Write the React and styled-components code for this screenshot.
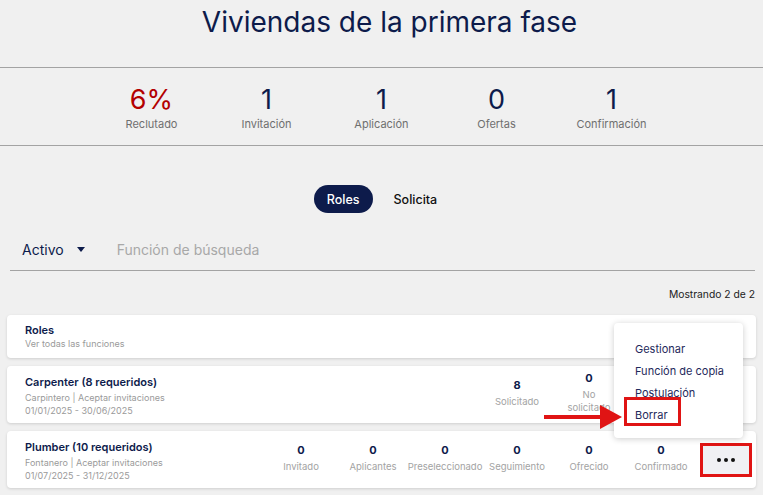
import React from "react";
import styled, { createGlobalStyle } from "styled-components";

const Global = createGlobalStyle`
  html, body { margin: 0; padding: 0; background: #f0f0f0; }
  body { font-family: Inter, "Noto Sans", sans-serif; color: #0d1b4b; }
  * { box-sizing: border-box; }
`;

const Page = styled.div`
  width: 763px;
  height: 495px;
  overflow: hidden;
  position: relative;
  background: #f0f0f0;
`;

const Title = styled.h1`
  margin: 0;
  height: 67px;
  padding: 3px 0 0 16px;
  text-align: center;
  font-weight: 400;
  font-size: 28px;
  line-height: 38px;
  color: #0d1b4b;
`;

const StatsBar = styled.div`
  border-top: 1px solid #a3a3a3;
  border-bottom: 1px solid #a3a3a3;
  height: 79px;
  display: flex;
  justify-content: center;
  padding-top: 15px;
`;

const Stat = styled.div`
  width: 115px;
  display: flex;
  flex-direction: column;
  align-items: center;
`;

const StatNum = styled.div`
  font-size: 27px;
  line-height: 34px;
  color: ${(p) => (p.$red ? "#b30000" : "#0d1b4b")};
`;

const StatLabel = styled.div`
  font-size: 11px;
  color: #6f6f6f;
  margin-top: 0;
`;

const Tabs = styled.div`
  display: flex;
  justify-content: center;
  gap: 8px;
  margin-top: 39px;
  padding-left: 1px;
`;

const Tab = styled.div`
  height: 28px;
  padding: 0 13px;
  border-radius: 14px;
  display: flex;
  align-items: center;
  font-size: 12.5px;
  font-weight: 500;
  background: ${(p) => (p.$active ? "#0d1b4b" : "transparent")};
  color: ${(p) => (p.$active ? "#fff" : "#111")};
`;

const FilterRow = styled.div`
  margin: 22px 8px 0 10px;
  height: 36px;
  border-bottom: 1px solid #a3a3a3;
  display: flex;
  align-items: center;
  padding: 0 0 6px 12px;
  font-size: 14px;
`;

const Select = styled.div`
  display: flex;
  align-items: center;
  gap: 13px;
  color: #0d1b4b;
  margin-right: 32px;
`;

const Caret = styled.span`
  width: 0;
  height: 0;
  border-left: 4.5px solid transparent;
  border-right: 4.5px solid transparent;
  border-top: 5px solid #0d1b4b;
`;

const Search = styled.div`
  color: #a8a8a8;
`;

const Count = styled.div`
  text-align: right;
  font-size: 10.3px;
  color: #222;
  margin: 17px 8px 0 0;
`;

const List = styled.div`
  display: flex;
  flex-direction: column;
  gap: 8px;
  margin: 15px 7px 0 7px;
`;

const Card = styled.div`
  background: #fff;
  border-radius: 4px;
  box-shadow: 0 1px 3px rgba(0, 0, 0, 0.14);
  height: ${(p) => p.$h}px;
  display: flex;
  align-items: center;
  padding: 0 4px 0 18px;
`;

const Info = styled.div`
  flex: 1;
  display: flex;
  flex-direction: column;
  align-self: flex-start;
  padding-top: ${(p) => p.$pt}px;
`;

const Name = styled.div`
  font-size: 11px;
  font-weight: 600;
  color: #0d1b4b;
  line-height: 14px;
`;

const Sub = styled.div`
  font-size: 9px;
  color: #9a9a9a;
  line-height: 13px;
  margin-top: ${(p) => p.$mt || 0}px;
`;

const Cols = styled.div`
  align-self: stretch;
  display: flex;
  align-items: center;
  padding-bottom: 4px;
`;

const Col = styled.div`
  width: 72px;
  display: flex;
  flex-direction: column;
  align-items: center;
  text-align: center;
`;

const ColNum = styled.div`
  font-size: 11px;
  font-weight: 700;
  color: #0d1b4b;
  line-height: 14px;
`;

const ColLabel = styled.div`
  font-size: 9.5px;
  color: #a3a3a3;
  line-height: 13px;
  margin-top: 3px;
`;

const Spacer = styled.div`
  width: ${(p) => p.$w}px;
`;

const DotsWrap = styled.div`
  width: 52px;
  height: 34px;
  margin-left: 3px;
  display: flex;
  align-items: center;
  justify-content: center;
  border: 3px solid #e01414;
`;

const DotsBtn = styled.div`
  width: 100%;
  height: 100%;
  background: #f0f0f4;
  display: flex;
  align-items: center;
  justify-content: center;
  gap: 3px;
`;

const Dot = styled.span`
  width: 4px;
  height: 4px;
  border-radius: 50%;
  background: #111;
`;

const Menu = styled.div`
  position: absolute;
  left: 614px;
  top: 323px;
  width: 129px;
  height: 115px;
  background: #fff;
  border-radius: 4px;
  box-shadow: 0 1px 6px rgba(0, 0, 0, 0.2);
  padding: 19px 0 0 21px;
  display: flex;
  flex-direction: column;
  gap: 8px;
`;

const MenuItem = styled.div`
  font-size: 11px;
  color: #1f2a5c;
  line-height: 14px;
  position: relative;
`;

const Highlight = styled.div`
  position: absolute;
  left: -11px;
  top: -11px;
  width: 57px;
  height: 29px;
  border: 3px solid #e01414;
`;

const Arrow = styled.svg`
  position: absolute;
  left: 544px;
  top: 405px;
`;

const stats = [
  ["6%", "Reclutado", true],
  ["1", "Invitación"],
  ["1", "Aplicación"],
  ["0", "Ofertas"],
  ["1", "Confirmación"],
];

const plumberCols = [
  ["0", "Invitado"],
  ["0", "Aplicantes"],
  ["0", "Preseleccionado"],
  ["0", "Seguimiento"],
  ["0", "Ofrecido"],
  ["0", "Confirmado"],
];

export default function App() {
  return (
    <Page>
      <Global />
      <Title>Viviendas de la primera fase</Title>
      <StatsBar>
        {stats.map(([n, l, r]) => (
          <Stat key={l}>
            <StatNum $red={r}>{n}</StatNum>
            <StatLabel>{l}</StatLabel>
          </Stat>
        ))}
      </StatsBar>
      <Tabs>
        <Tab $active>Roles</Tab>
        <Tab>Solicita</Tab>
      </Tabs>
      <FilterRow>
        <Select>
          Activo <Caret />
        </Select>
        <Search>Función de búsqueda</Search>
      </FilterRow>
      <Count>Mostrando 2 de 2</Count>
      <List>
        <Card $h={43}>
          <Info $pt={8}>
            <Name>Roles</Name>
            <Sub>Ver todas las funciones</Sub>
          </Info>
        </Card>
        <Card $h={57}>
          <Info $pt={9}>
            <Name>Carpenter (8 requeridos)</Name>
            <Sub $mt={2}>Carpintero | Aceptar invitaciones</Sub>
            <Sub>01/01/2025 - 30/06/2025</Sub>
          </Info>
          <Cols>
            <Col>
              <ColNum>8</ColNum>
              <ColLabel>Solicitado</ColLabel>
            </Col>
            <Col>
              <ColNum>0</ColNum>
              <ColLabel>
                No
                <br />
                solicitado
              </ColLabel>
            </Col>
          </Cols>
          <Spacer $w={127} />
        </Card>
        <Card $h={57}>
          <Info $pt={9}>
            <Name>Plumber (10 requeridos)</Name>
            <Sub $mt={2}>Fontanero | Aceptar invitaciones</Sub>
            <Sub>01/07/2025 - 31/12/2025</Sub>
          </Info>
          <Cols>
            {plumberCols.map(([n, l]) => (
              <Col key={l}>
                <ColNum>{n}</ColNum>
                <ColLabel>{l}</ColLabel>
              </Col>
            ))}
          </Cols>
          <DotsWrap>
            <DotsBtn>
              <Dot />
              <Dot />
              <Dot />
            </DotsBtn>
          </DotsWrap>
        </Card>
      </List>
      <Menu>
        <MenuItem>Gestionar</MenuItem>
        <MenuItem>Función de copia</MenuItem>
        <MenuItem>Postulación</MenuItem>
        <MenuItem>
          Borrar
          <Highlight />
        </MenuItem>
      </Menu>
      <Arrow width="80" height="24" viewBox="0 0 80 24">
        <rect x="0" y="10" width="58" height="4" fill="#e01414" />
        <polygon points="56,0 78,12 56,24" fill="#e01414" />
      </Arrow>
    </Page>
  );
}
